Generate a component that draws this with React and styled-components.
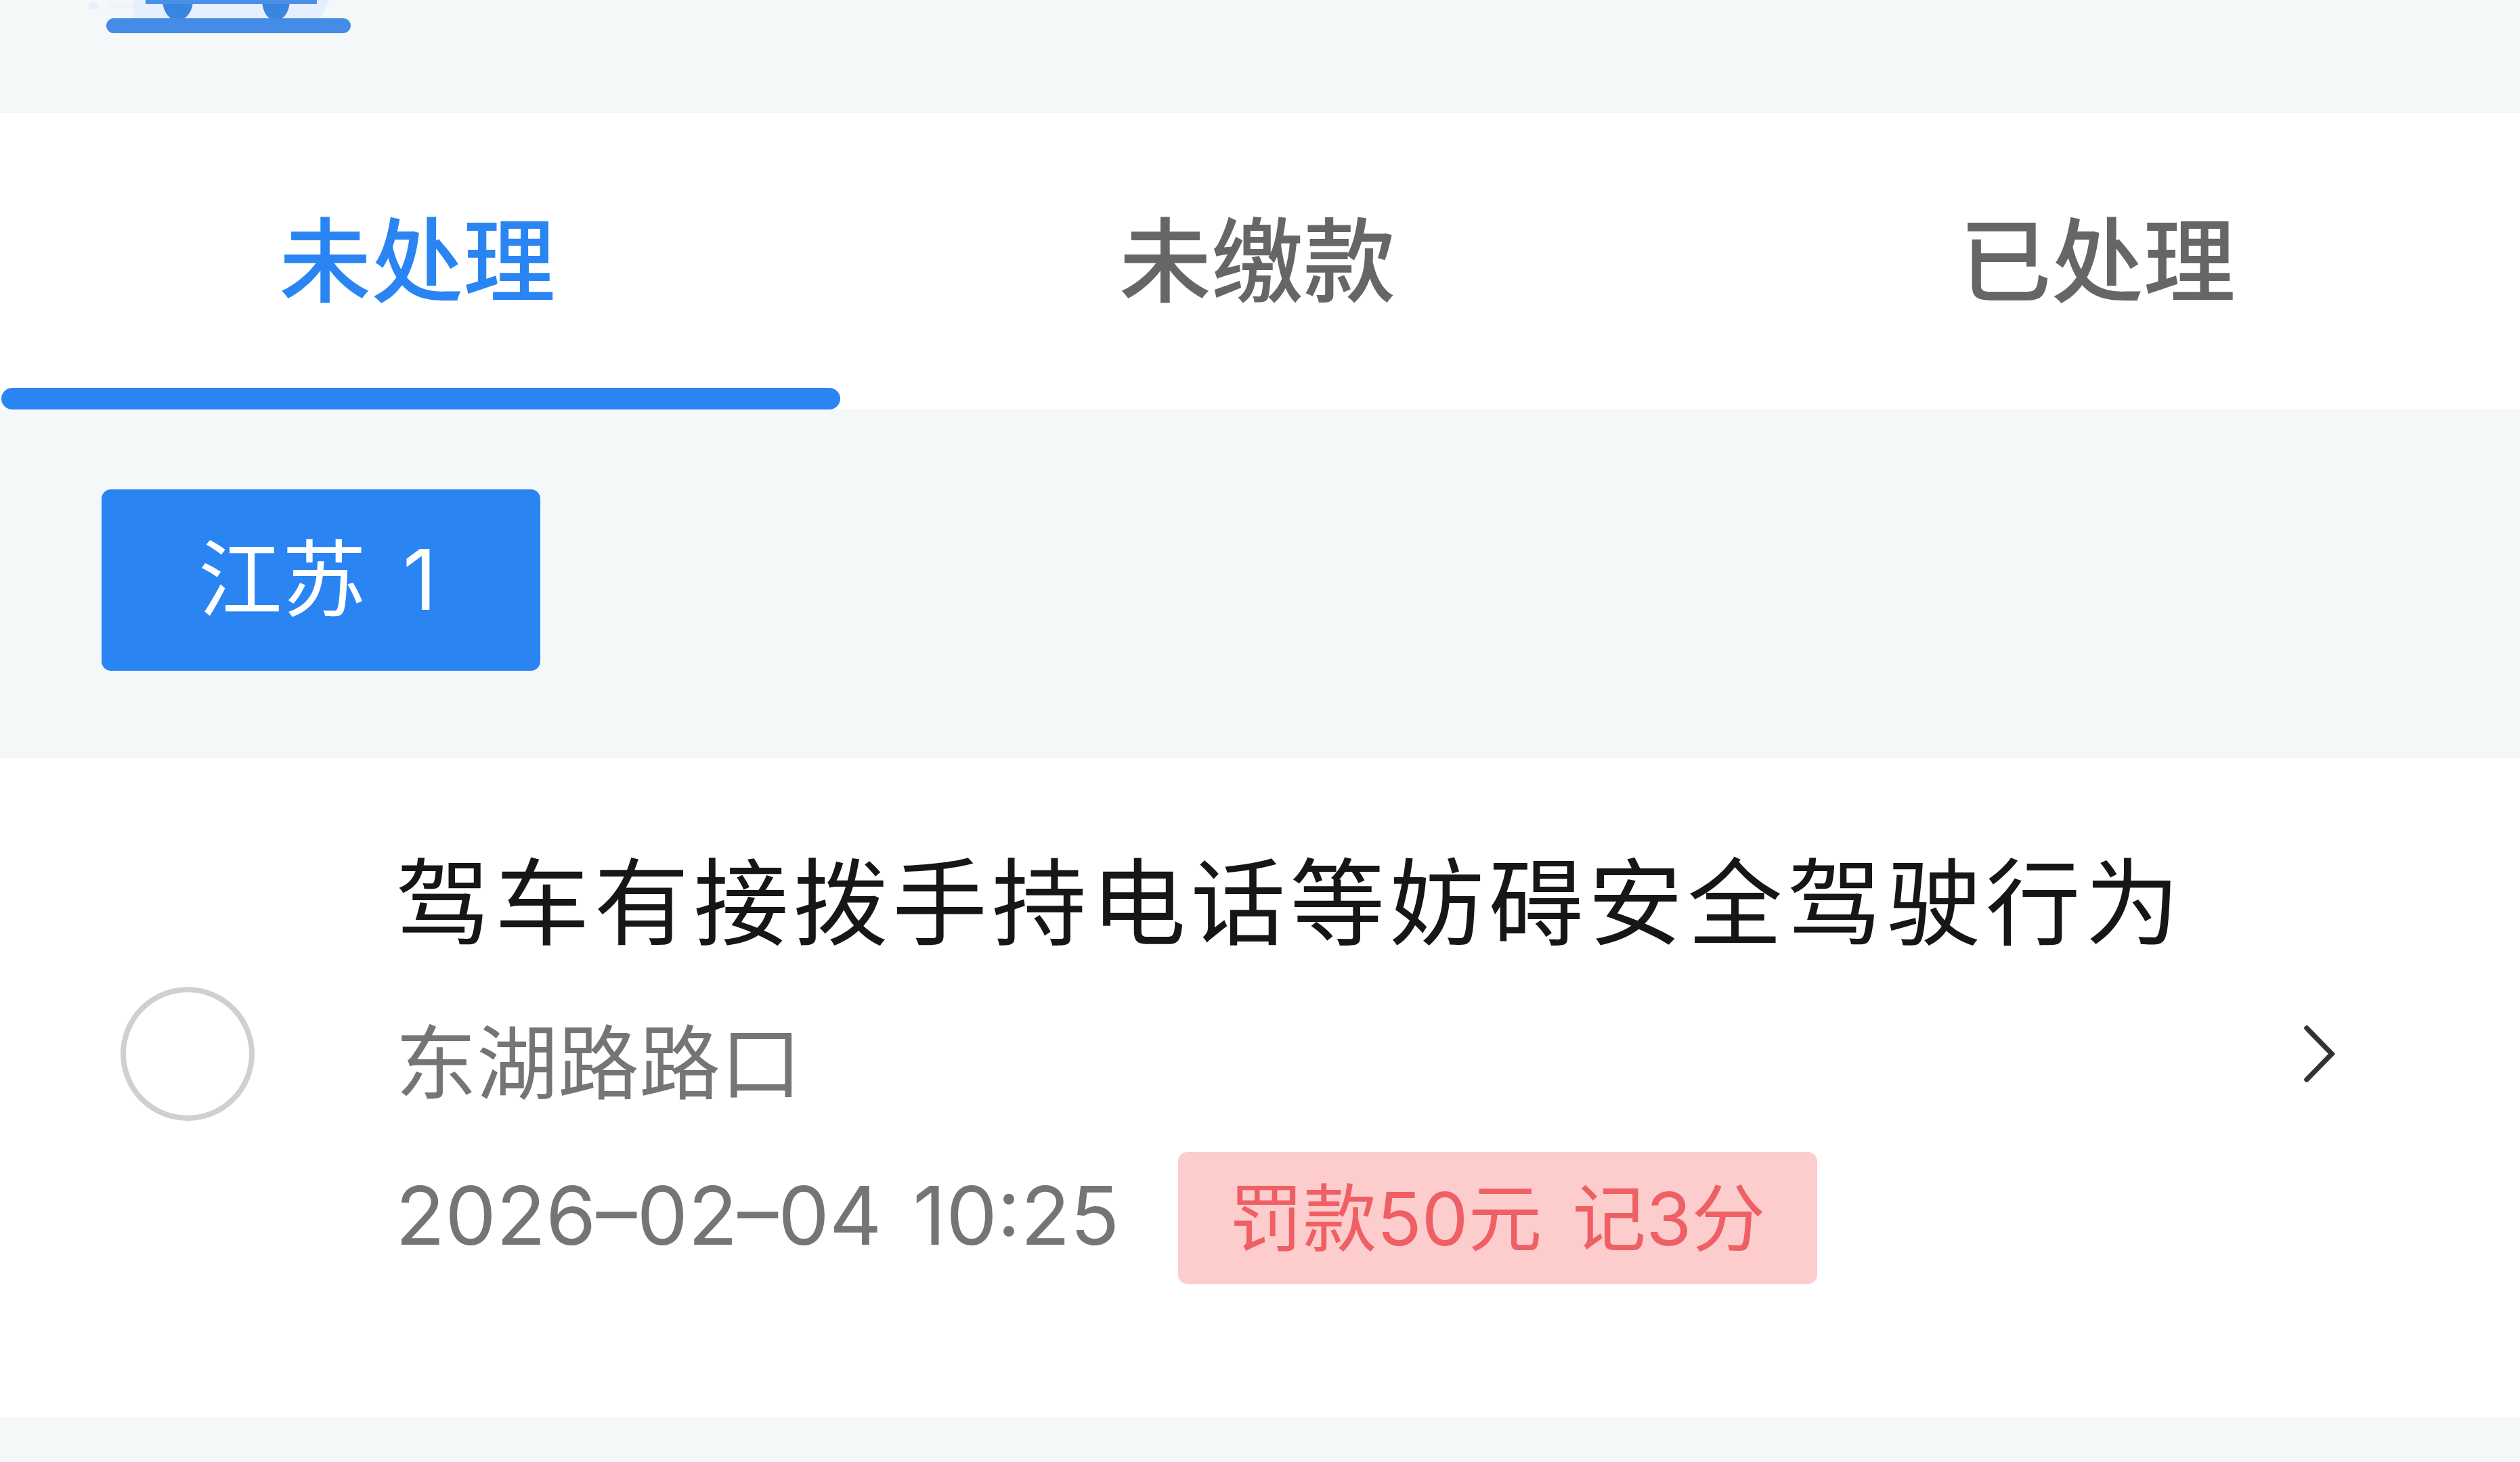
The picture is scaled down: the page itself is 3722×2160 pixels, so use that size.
import React from 'react';
import styled, { createGlobalStyle } from 'styled-components';

const colors = {
  page: '#f5f8f9',
  blue: '#2a85f3',
  tabGrey: '#666666',
  title: '#161616',
  sub: '#757575',
  badgeBg: '#fdcccd',
  badgeText: '#ee6064',
};

const GlobalStyle = createGlobalStyle`
  html, body {
    margin: 0;
    padding: 0;
    background: ${colors.page};
  }
  body {
    font-family: Inter, "Noto Sans CJK SC", sans-serif;
  }
`;

const Page = styled.div`
  width: 3722px;
  height: 2160px;
  display: flex;
  flex-direction: column;
  background: ${colors.page};
  overflow: hidden;
`;

const Banner = styled.div`
  height: 167px;
  padding-left: 130px;
  flex-shrink: 0;
`;

const TabBar = styled.div`
  height: 438px;
  display: grid;
  grid-template-columns: repeat(3, 1fr);
  background: #fff;
  flex-shrink: 0;
`;

const Tab = styled.div`
  display: flex;
  flex-direction: column;
  font-size: 136px;
  font-weight: 500;
  color: ${(p) => (p.$active ? colors.blue : colors.tabGrey)};
`;

const TabLabel = styled.div`
  flex: 1;
  display: flex;
  align-items: center;
  justify-content: center;
  padding: 12px 8px 0 0;
`;

const TabLine = styled.div`
  height: 32px;
  margin-left: 2px;
  border-radius: 16px;
  background: ${(p) => (p.$active ? colors.blue : 'transparent')};
`;

const FilterRow = styled.div`
  height: 515px;
  padding: 118px 0 0 150px;
  box-sizing: border-box;
  flex-shrink: 0;
`;

const RegionChip = styled.div`
  width: 648px;
  height: 268px;
  padding: 0 10px 20px 0;
  box-sizing: border-box;
  display: flex;
  align-items: center;
  justify-content: center;
  border-radius: 14px;
  background: ${colors.blue};
  color: #fff;
  font-size: 124px;
  word-spacing: 19px;
  white-space: pre;
`;

const Card = styled.div`
  height: 974px;
  padding-bottom: 100px;
  box-sizing: border-box;
  display: grid;
  grid-template-columns: 584px 1fr 319px;
  align-items: center;
  background: #fff;
  flex-shrink: 0;
`;

const CheckCell = styled.div`
  padding-left: 178px;
`;

const Radio = styled.div`
  width: 198px;
  height: 198px;
  box-sizing: border-box;
  border: 8px solid #d0d0d2;
  border-radius: 50%;
`;

const Content = styled.div`
  padding-top: 22px;
  display: flex;
  flex-direction: column;
`;

const Title = styled.div`
  font-size: 140px;
  line-height: 190px;
  letter-spacing: 6.8px;
  color: ${colors.title};
  white-space: nowrap;
`;

const Road = styled.div`
  margin-top: 63px;
  font-size: 120px;
  line-height: 160px;
  color: ${colors.sub};
`;

const MetaRow = styled.div`
  margin-top: 50px;
  display: flex;
  align-items: center;
  gap: 86px;
`;

const DateText = styled.div`
  padding-bottom: 8px;
  font-size: 120px;
  word-spacing: 12px;
  color: ${colors.sub};
  white-space: pre;
`;

const Penalty = styled.div`
  width: 944px;
  height: 195px;
  padding-bottom: 14px;
  box-sizing: border-box;
  display: flex;
  align-items: center;
  justify-content: center;
  border-radius: 14px;
  background: ${colors.badgeBg};
  color: ${colors.badgeText};
  font-size: 109px;
  word-spacing: 14px;
  white-space: pre;
`;

const ChevronCell = styled.div`
  display: flex;
  align-items: center;
`;

// the bottom edge of the cut off illustration at the top
const BannerArt = () => (
  <svg width="400" height="60" viewBox="0 0 400 60">
    <rect x="2" y="3" width="13" height="11" rx="4" fill="#e6effb" />
    <rect x="30" y="4" width="37" height="9" fill="#eef4fb" />
    <path d="M67 0H357L343 27H67Z" fill="#e5effe" />
    <path d="M110 0H155C155 14 147 30 132 30C118 30 110 14 110 0Z" fill="#3a85df" />
    <path d="M257 0H298C298 14 291 30 277 30C264 30 257 14 257 0Z" fill="#3a85df" />
    <rect x="85" y="0" width="253" height="6" fill="#4a90e6" />
    <rect x="27" y="27" width="361" height="22" rx="11" fill="#448ce6" />
  </svg>
);

const Chevron = () => (
  <svg width="46" height="84" viewBox="0 0 46 84" fill="none">
    <path d="M4 4L41 42L4 80" stroke="#333" strokeWidth="7.5" strokeLinecap="round" />
  </svg>
);

const tabs = ['未处理', '未缴款', '已处理'];

export default function App() {
  return (
    <Page>
      <GlobalStyle />
      <Banner>
        <BannerArt />
      </Banner>
      <TabBar>
        {tabs.map((t, i) => (
          <Tab key={t} $active={i === 0}>
            <TabLabel>{t}</TabLabel>
            <TabLine $active={i === 0} />
          </Tab>
        ))}
      </TabBar>
      <FilterRow>
        <RegionChip>江苏 1</RegionChip>
      </FilterRow>
      <Card>
        <CheckCell>
          <Radio />
        </CheckCell>
        <Content>
          <Title>驾车有接拨手持电话等妨碍安全驾驶行为</Title>
          <Road>东湖路路口</Road>
          <MetaRow>
            <DateText>2026–02–04 10:25</DateText>
            <Penalty>罚款50元 记3分</Penalty>
          </MetaRow>
        </Content>
        <ChevronCell>
          <Chevron />
        </ChevronCell>
      </Card>
    </Page>
  );
}
